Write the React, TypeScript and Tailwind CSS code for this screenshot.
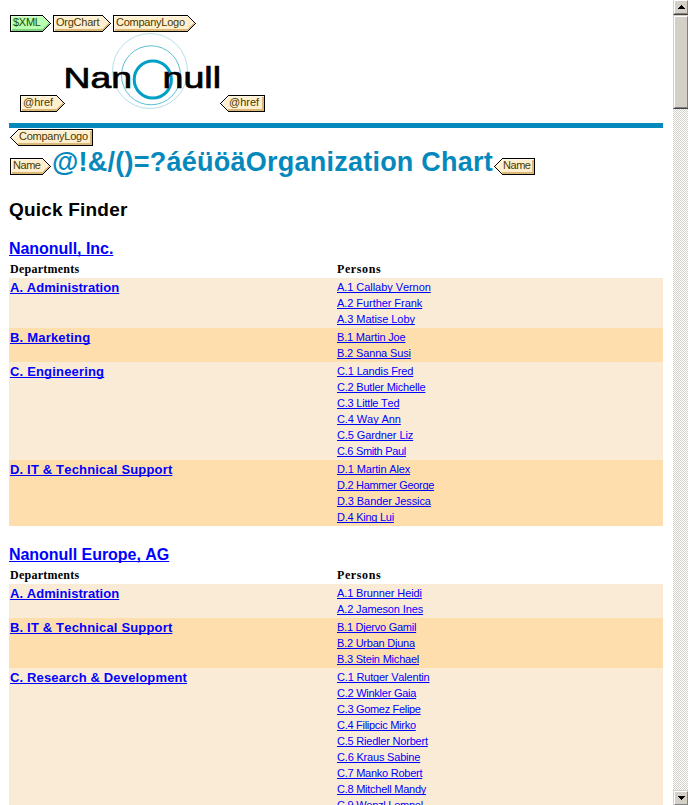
import React from "react";

type Dir = "open" | "close";

function Tag({ label, w, dir = "open", green = false }: { label: string; w: number; dir?: Dir; green?: boolean }) {
  const open = dir === "open";
  const shape = open
    ? `M0.5 0.5H${w - 8.5}L${w - 0.5} 8.5L${w - 8.5} 16.5H0.5Z`
    : `M${w - 0.5} 0.5H8.5L0.5 8.5L8.5 16.5H${w - 0.5}Z`;
  const light = open ? `M1.5 15V1.5H${w - 9}` : `M2 8.5L9 1.5H${w - 2}`;
  const shade = open
    ? `M2 15H${w - 8.5}L${w - 2} 8.5`
    : `M8 15H${w - 2}V2`;
  const tracking = label === "@href" ? "tracking-[0px]" : label === "Name" ? "tracking-[-0.45px]" : "tracking-[-0.25px]";
  return (
    <span className="relative block h-[17px] shrink-0" style={{ width: w }}>
      <svg className="absolute inset-0" width={w} height="17" shapeRendering="crispEdges">
        <path d={shape} fill={green ? "#b9ffb0" : "#ffefce"} />
        <path d={shade} fill="none" stroke={green ? "#80d080" : "#dcb878"} strokeWidth="2" />
        <path d={light} fill="none" stroke={green ? "#e0ffdc" : "#fff8e8"} />
        <path d={shape} fill="none" stroke="#000" />
      </svg>
      <span
        className={`relative block whitespace-nowrap text-[11px] leading-[15px] ${tracking} ${
          open ? "pl-[3px]" : "pl-[9px]"
        } ${green ? "text-[#254a00]" : "text-[#4a3a00]"}`}
      >
        {label}
      </span>
    </span>
  );
}

function Logo() {
  return (
    <svg width="155" height="80" viewBox="65 32 155 80" className="shrink-0 overflow-visible">
      <circle cx="150" cy="71" r="37.5" fill="none" stroke="#b5e0ea" strokeWidth="1" />
      <circle cx="151" cy="75.3" r="29.5" fill="none" stroke="#5cbdd3" strokeWidth="1" />
      <circle cx="152.8" cy="79.5" r="18.6" fill="#fff" stroke="#00a0c6" strokeWidth="3" />
      <g fontFamily="'Liberation Sans', Arial, sans-serif" fontSize="29" fill="#000" stroke="#000" strokeWidth="0.7">
        <text x="63.5" y="88.3" textLength="68.5" lengthAdjust="spacingAndGlyphs">Nan</text>
        <text x="162.5" y="88.3" textLength="58.5" lengthAdjust="spacingAndGlyphs">null</text>
      </g>
    </svg>
  );
}

// Each entry carries its label and the total width adjustment, in pixels, spread over its letters.
type Entry = [label: string, adjust: number];
type Department = { name: Entry; persons: Entry[] };

const inc: Department[] = [
  { name: ["A. Administration", 0.9], persons: [["A.1 Callaby Vernon", -1], ["A.2 Further Frank", -1], ["A.3 Matise Loby", -1]] },
  { name: ["B. Marketing", 2.3], persons: [["B.1 Martin Joe", -2.5], ["B.2 Sanna Susi", -2]] },
  {
    name: ["C. Engineering", 2.5],
    persons: [
      ["C.1 Landis Fred", -2],
      ["C.2 Butler Michelle", -4],
      ["C.3 Little Ted", -3],
      ["C.4 Way Ann", -1],
      ["C.5 Gardner Liz", -1.5],
      ["C.6 Smith Paul", -4.5],
    ],
  },
  {
    name: ["D. IT & Technical Support", 4.2],
    persons: [["D.1 Martin Alex", -2], ["D.2 Hammer George", -5], ["D.3 Bander Jessica", -1.5], ["D.4 King Lui", -3]],
  },
];

const europe: Department[] = [
  { name: ["A. Administration", 0.9], persons: [["A.1 Brunner Heidi", -2], ["A.2 Jameson Ines", -2]] },
  { name: ["B. IT & Technical Support", 4.2], persons: [["B.1 Djervo Gamil", -4], ["B.2 Urban Djuna", -3.5], ["B.3 Stein Michael", -3.5]] },
  {
    name: ["C. Research & Development", 3.7],
    persons: [
      ["C.1 Rutger Valentin", -3.5],
      ["C.2 Winkler Gaia", -4],
      ["C.3 Gomez Felipe", -5],
      ["C.4 Filipcic Mirko", -5],
      ["C.5 Riedler Norbert", -4],
      ["C.6 Kraus Sabine", -3],
      ["C.7 Manko Robert", -4],
      ["C.8 Mitchell Mandy", -4.5],
      ["C.9 Wenzl Lempel", -4],
    ],
  },
];

const link = "underline decoration-1 underline-offset-1 [text-decoration-skip-ink:none] text-[#0000ff]";

function Link({ entry: [label, adjust] }: { entry: Entry }) {
  return (
    <a className={link} style={{ letterSpacing: `${adjust / label.length}px` }}>
      {label}
    </a>
  );
}

function Office({ name, departments }: { name: string; departments: Department[] }) {
  return (
    <section>
      <h3 className="h-[22px] text-[16px] font-bold leading-[20px] tracking-[-0.04px]">
        <a className={link}>{name}</a>
      </h3>
      <div className="grid h-[17px] grid-cols-2 font-['Liberation_Serif',serif] text-[12px] font-bold leading-[17px] tracking-[0.24px]">
        <span className="pl-px">Departments</span>
        <span className="pl-px tracking-[0.6px]">Persons</span>
      </div>
      {departments.map((d, i) => (
        <div key={d.name[0]} className={`grid grid-cols-2 py-px ${i % 2 ? "bg-[#ffdead]" : "bg-[#faebd7]"}`}>
          <div className="pl-px text-[13px] font-bold leading-[17px]">
            <Link entry={d.name} />
          </div>
          <ul className="pl-px text-[11px] leading-[16px]">
            {d.persons.map((p) => (
              <li key={p[0]} className="h-4">
                <Link entry={p} />
              </li>
            ))}
          </ul>
        </div>
      ))}
    </section>
  );
}

const bevel = "border-l border-[#d4d0c8] shrink-0";

function Scrollbar() {
  return (
    <div className="flex h-full w-[15px] shrink-0 flex-col bg-[conic-gradient(#d4d0c8_25%,#fff_0_50%,#d4d0c8_0_75%,#fff_0)] bg-[length:2px_2px]">
      <div className={`${bevel} h-[15px] border-b border-b-[#404040]`}>
        <div className="flex h-[14px] justify-center border border-b-[#808080] border-r-[#808080] border-l-white border-t-white bg-[#d4d0c8] pt-1">
          <svg width="7" height="4" shapeRendering="crispEdges">
            <path d="M3 0h1v1h1v1h1v1h1v1H0V3h1V2h1V1h1z" />
          </svg>
        </div>
      </div>
      <div className={`${bevel} h-[94px] border-y border-b-[#404040]`}>
        <div className="h-full border border-b-[#808080] border-r-[#808080] border-l-white border-t-white bg-[#d4d0c8]" />
      </div>
      <div className="flex-1" />
      <div className={`${bevel} h-[15px] border-t`}>
        <div className="flex h-[14px] justify-center border border-b-[#808080] border-r-[#808080] border-l-white border-t-white bg-[#d4d0c8] pt-1">
          <svg width="7" height="4" shapeRendering="crispEdges">
            <path d="M0 0h7v1H6v1H5v1H4v1H3V3H2V2H1V1H0z" />
          </svg>
        </div>
      </div>
    </div>
  );
}

export default function App() {
  return (
    <div className="flex h-[805px] w-[688px] overflow-hidden bg-white font-['Liberation_Sans',Arial,sans-serif] text-black [font-kerning:none]">
      <main className="h-full min-w-0 flex-1 overflow-hidden pl-[9px] pr-[10px] pt-[15px]">
        <div className="flex gap-[2px] pl-px">
          <Tag label="$XML" w={41} green />
          <Tag label="OrgChart" w={58} />
          <Tag label="CompanyLogo" w={83} />
        </div>
        <div className="flex h-[80px] items-end pl-[11px]">
          <Tag label="@href" w={45} />
          <Logo />
          <Tag label="@href" w={45} dir="close" />
        </div>
        <div className="mt-[11px] h-[5px] bg-[#0588bb]" />
        <div className="mt-px pl-px">
          <Tag label="CompanyLogo" w={83} dir="close" />
        </div>
        <div className="flex h-[29px] items-end pl-px">
          <Tag label="Name" w={41} />
          <h1 className="-mb-[3px] w-[443px] whitespace-nowrap pl-px text-[27px] font-bold leading-[31px] tracking-[0.24px] text-[#0588bb]">
            @!&amp;/()=?áéüöäOrganization Chart
          </h1>
          <Tag label="Name" w={41} dir="close" />
        </div>
        <h2 className="mt-[23px] h-[41px] text-[19px] font-bold leading-[24px] tracking-[0.2px]">Quick Finder</h2>
        <Office name="Nanonull, Inc." departments={inc} />
        <div className="h-[19px]" />
        <Office name="Nanonull Europe, AG" departments={europe} />
      </main>
      <Scrollbar />
    </div>
  );
}
